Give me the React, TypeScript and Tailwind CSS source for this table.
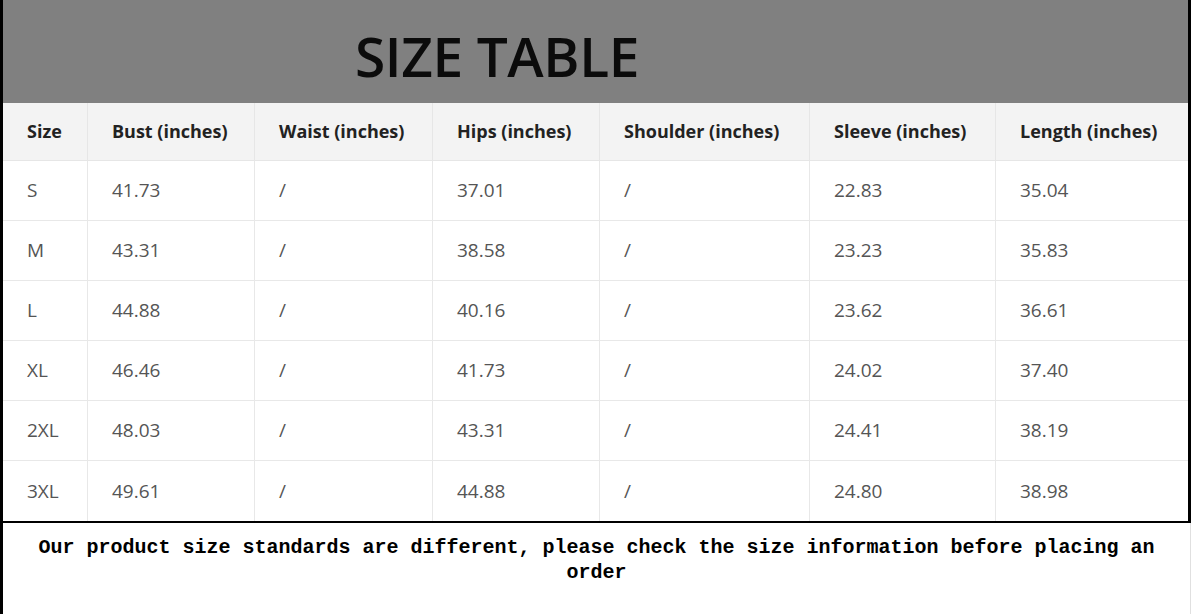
import React from "react";

const headers = [
  "Size",
  "Bust (inches)",
  "Waist (inches)",
  "Hips (inches)",
  "Shoulder (inches)",
  "Sleeve (inches)",
  "Length (inches)",
];

const widths = ["w-[85px]", "w-[167px]", "w-[178px]", "w-[167px]", "w-[210px]", "w-[186px]", "flex-1"];

const rows = [
  ["S", "41.73", "/", "37.01", "/", "22.83", "35.04"],
  ["M", "43.31", "/", "38.58", "/", "23.23", "35.83"],
  ["L", "44.88", "/", "40.16", "/", "23.62", "36.61"],
  ["XL", "46.46", "/", "41.73", "/", "24.02", "37.40"],
  ["2XL", "48.03", "/", "43.31", "/", "24.41", "38.19"],
  ["3XL", "49.61", "/", "44.88", "/", "24.80", "38.98"],
];

export default function App() {
  return (
    <div className="w-[1193px] h-[614px] bg-white overflow-hidden">
      <div className="w-[1191px] h-[614px] border-l-[3px] border-black flex flex-col">
        <div className="border-r-[3px] border-b-2 border-black flex flex-col">
          <div className="h-[103px] bg-[#808080] flex items-center">
            <h1
              className="ml-[352px] mt-[8px] text-[55px] font-semibold text-[#0b0b0b] leading-none tracking-[-0.4px]"
              style={{ fontFamily: '"Open Sans", "Noto Sans", sans-serif' }}
            >
              SIZE TABLE
            </h1>
          </div>
          <div
            className="flex flex-col"
            style={{ fontFamily: '"Open Sans", "Noto Sans", sans-serif' }}
          >
            <div className="flex h-[58px] bg-[#f3f3f3] border-b border-[#e6e6e6]">
              {headers.map((h, i) => (
                <div
                  key={h}
                  className={`${widths[i]} flex items-center pl-[24px] text-[18px] font-bold text-[#222] ${
                    i < 6 ? "border-r border-[#e6e6e6]" : ""
                  }`}
                >
                  {h}
                </div>
              ))}
            </div>
            {rows.map((r, ri) => (
              <div
                key={ri}
                className={`flex h-[60px] bg-white ${ri < 5 ? "border-b border-[#e8e8e8]" : ""}`}
              >
                {r.map((c, i) => (
                  <div
                    key={i}
                    className={`${widths[i]} flex items-center pl-[24px] text-[19px] text-[#555] ${
                      i < 6 ? "border-r border-[#e8e8e8]" : ""
                    }`}
                  >
                    {c}
                  </div>
                ))}
              </div>
            ))}
          </div>
        </div>
        <div className="flex-1 border-r border-[#e0e0e0] pt-[12px] px-[8px]">
          <p
            className="text-center text-[20px] leading-[25px] font-bold text-black"
            style={{ fontFamily: '"Liberation Mono", "DejaVu Sans Mono", monospace' }}
          >
            Our product size standards are different, please check the size information before placing an order
          </p>
        </div>
      </div>
    </div>
  );
}
